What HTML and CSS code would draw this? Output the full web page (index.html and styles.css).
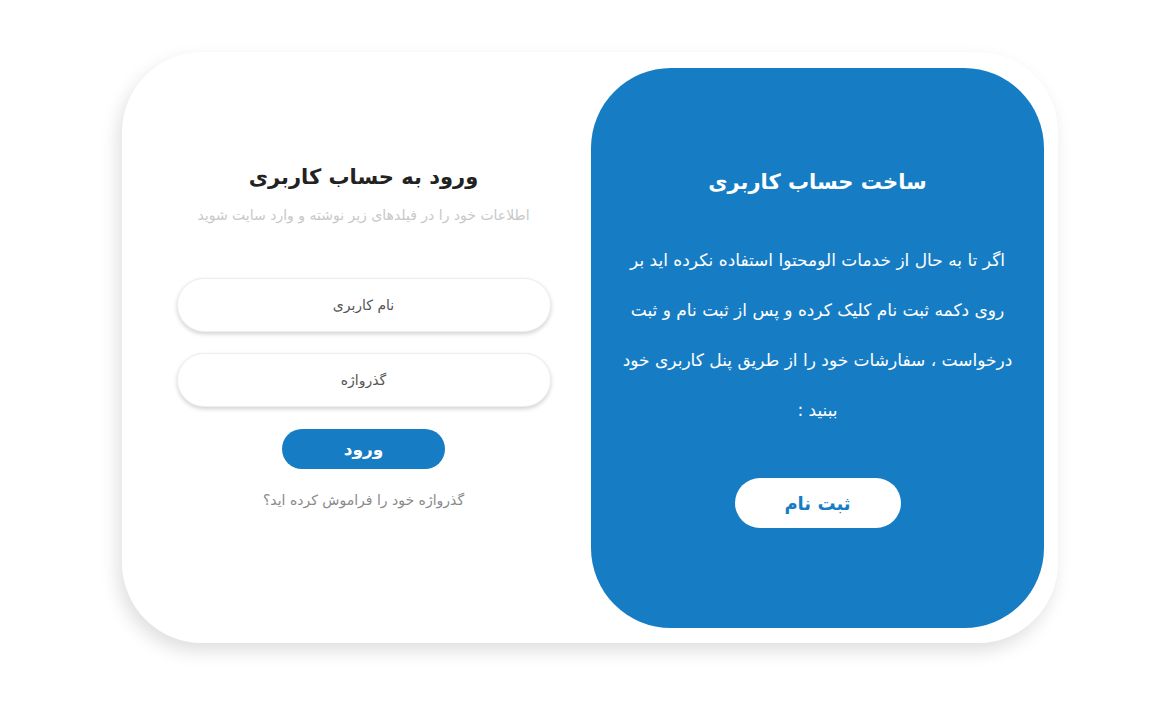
FILE: index.html
```html
<!DOCTYPE html>
<html lang="fa" dir="rtl">
<head>
    <meta charset="UTF-8">
    <meta name="viewport" content="width=device-width, initial-scale=1.0">
    <title>ورود به حساب کاربری</title>
    <link rel="stylesheet" href="styles.css">
</head>
<body>
    <div class="auth-card">
        <div class="signup-panel">
            <h2 class="signup-title">ساخت حساب کاربری</h2>
            <p class="signup-text">اگر تا به حال از خدمات الومحتوا استفاده نکرده اید بر روی دکمه ثبت نام کلیک کرده و پس از ثبت نام و ثبت درخواست ، سفارشات خود را از طریق پنل کاربری خود ببنید :</p>
            <button class="signup-btn">ثبت نام</button>
        </div>
        <form class="login-panel">
            <h2 class="login-title">ورود به حساب کاربری</h2>
            <p class="login-sub">اطلاعات خود را در فیلدهای زیر نوشته و وارد سایت شوید</p>
            <input type="text" class="field" placeholder="نام کاربری">
            <input type="password" class="field" placeholder="گذرواژه">
            <button type="button" class="login-btn">ورود</button>
            <a href="#" class="forgot">گذرواژه خود را فراموش کرده اید؟</a>
        </form>
    </div>
</body>
</html>
```

FILE: styles.css
```css
body {
    margin: 0;
    min-height: 100vh;
    background: #fff;
    font-family: "DejaVu Sans", sans-serif;
}
.auth-card {
    width: 936px;
    height: 591px;
    margin: 52px 98px 0 auto;
    box-sizing: border-box;
    padding: 16px 14px 15px 14px;
    background: #fff;
    border-radius: 80px;
    box-shadow: -4px 8px 18px rgba(0,0,0,0.13);
    display: flex;
}
.signup-panel {
    width: 453px;
    flex-shrink: 0;
    background: #167dc4;
    border-radius: 80px;
    color: #fff;
    display: flex;
    flex-direction: column;
    align-items: center;
    box-sizing: border-box;
    padding: 102px 26px 0;
    text-align: center;
}
.signup-title {
    margin: 0;
    font-size: 21px;
    font-weight: bold;
}
.signup-text {
    margin: 41px 0 0;
    font-size: 17px;
    line-height: 50px;
}
.signup-btn {
    margin-top: 43px;
    width: 166px;
    height: 50px;
    border: none;
    border-radius: 25px;
    background: #fff;
    color: #167dc4;
    font-family: inherit;
    font-size: 18px;
    font-weight: bold;
    cursor: pointer;
}
.login-panel {
    flex: 1;
    display: flex;
    flex-direction: column;
    align-items: center;
    padding-top: 97px;
}
.login-title {
    margin: 0;
    font-size: 21px;
    font-weight: bold;
    color: #222;
}
.login-sub {
    margin: 18px 0 0;
    font-size: 14px;
    color: #c8c8c8;
}
.field {
    width: 374px;
    height: 54px;
    box-sizing: border-box;
    margin-top: 21px;
    border: 1px solid #eee;
    border-radius: 27px;
    box-shadow: 0 2px 4px rgba(0,0,0,0.18);
    text-align: center;
    font-family: inherit;
    font-size: 14px;
    outline: none;
}
.field:first-of-type {
    margin-top: 55px;
}
.field::placeholder {
    color: #555;
}
.login-btn {
    margin-top: 22px;
    width: 163px;
    height: 40px;
    border: none;
    border-radius: 20px;
    background: #167dc4;
    color: #fff;
    font-family: inherit;
    font-size: 17px;
    font-weight: bold;
    cursor: pointer;
}
.forgot {
    margin-top: 23px;
    font-size: 14px;
    color: #8a8a8a;
    text-decoration: none;
}
```
